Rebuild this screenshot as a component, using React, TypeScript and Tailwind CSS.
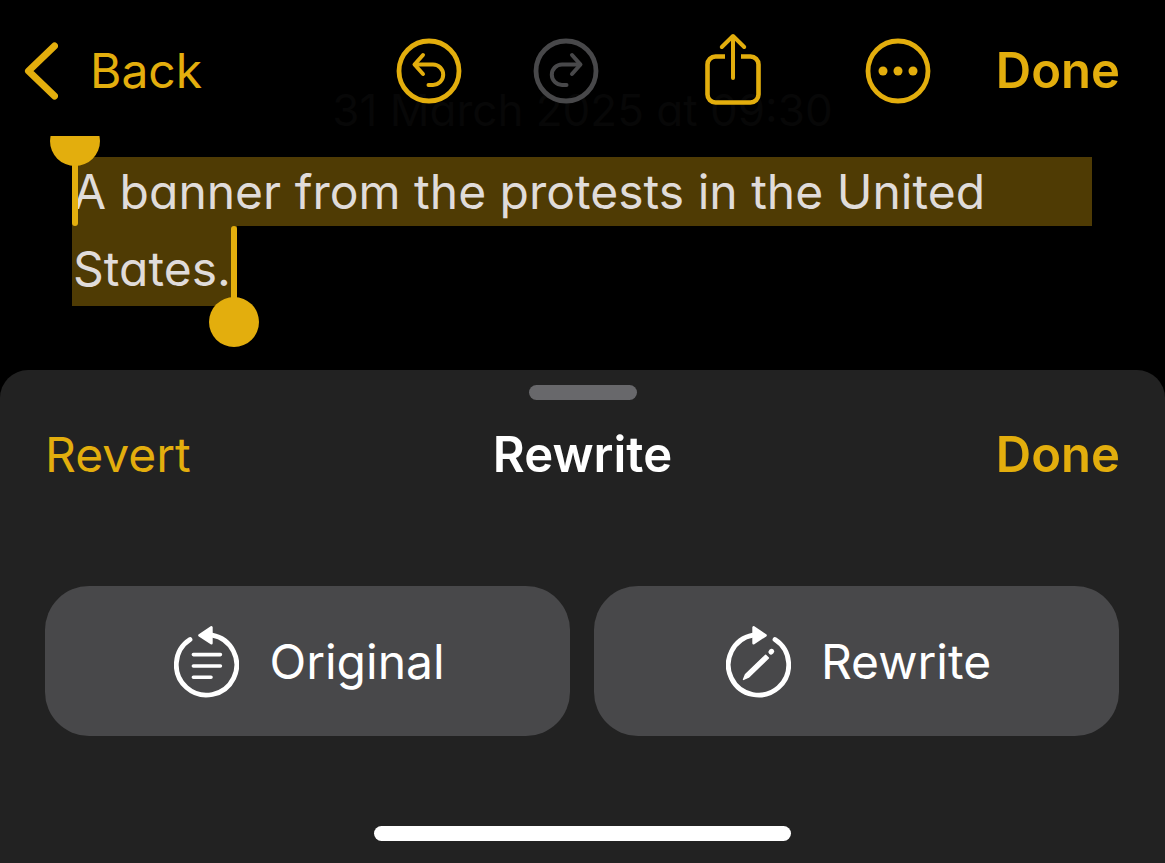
import type { ReactNode } from "react";

function CircleIcon({ children }: { children: ReactNode }) {
  return (
    <svg width="66" height="66" viewBox="0 0 66 66" fill="none" stroke="currentColor" aria-hidden="true">
      <circle cx="33" cy="33" r="30" strokeWidth="4.800" />
      {children}
    </svg>
  );
}

function Toolbar() {
  return (
    <header className="relative z-10 h-[136px] bg-black text-[#e3ae0d]">
      {/* note date, dimmed behind the bar */}
      <p className="absolute inset-x-0 top-20 text-center text-[44px] leading-[60px] text-[#070707] [font-feature-settings:'cv11']">
        31 March 2025 at 09:30
      </p>
      <div className="relative flex h-[141px] items-center pl-6 pr-[45px]">
        <button className="flex items-center gap-8">
          <svg width="34" height="58" viewBox="0 0 34 58" fill="none" stroke="currentColor" aria-hidden="true">
            <path d="M30.500 4 4.500 29 30.500 54" strokeWidth="7" strokeLinecap="round" strokeLinejoin="round" />
          </svg>
          Back
        </button>
        <div className="ml-auto mr-[65px] flex items-center">
          <button aria-label="Undo">
            <CircleIcon>
              <g strokeWidth="4" strokeLinecap="round" strokeLinejoin="round">
                <path d="M27 17 18.500 26.500 27 36" />
                <path d="M19 26.500H37a10.200 10.200 0 0 1 0 20.400H32.500" />
              </g>
            </CircleIcon>
          </button>
          <button aria-label="Redo" disabled className="ml-[71px] text-[#48484a]">
            <CircleIcon>
              <g strokeWidth="4" strokeLinecap="round" strokeLinejoin="round">
                <path d="M39 17 47.500 26.500 39 36" />
                <path d="M47 26.500H29a10.200 10.200 0 0 0 0 20.400H33.500" />
              </g>
            </CircleIcon>
          </button>
          <button aria-label="Share" className="ml-[106px]">
            <svg width="56" height="76" viewBox="0 0 56 76" fill="none" stroke="currentColor" aria-hidden="true">
              <path d="M20 23.500H10.500a8 8 0 0 0-8 8v30a8 8 0 0 0 8 8H45.500a8 8 0 0 0 8-8V31.500a8 8 0 0 0-8-8H36" strokeWidth="4.600" />
              <path d="M28 4V45M16.800 14 28 3 39.200 14" strokeWidth="4" strokeLinecap="round" strokeLinejoin="round" />
            </svg>
          </button>
          <button aria-label="More" className="ml-[104px]">
            <CircleIcon>
              <g fill="currentColor" stroke="none">
                <circle cx="18" cy="33" r="4.500" />
                <circle cx="33" cy="33" r="4.500" />
                <circle cx="48" cy="33" r="4.500" />
              </g>
            </CircleIcon>
          </button>
        </div>
        <button className="text-[49px] font-semibold">Done</button>
      </div>
    </header>
  );
}

function Note() {
  return (
    <main className="pb-16 pl-[72px] pr-[73px] pt-[21px] text-[#e0dcda] [font-feature-settings:'cv11']">
      <p>
        <span className="relative block bg-[#4f3b04] pl-px leading-[69px]">
          A banner from the protests in the United
          <span className="absolute bottom-0 left-0 h-16 w-1.5 rounded-full bg-[#e3ae0d]" />
          <span className="absolute -left-[22px] -top-[41px] size-[50px] rounded-full bg-[#e3ae0d]" />
        </span>
        <span className="relative inline-block bg-[#4f3b04] pl-px pr-1.5 pt-1.5 align-top leading-[74px]">
          States.
          <span className="absolute right-0 top-0 h-20 w-1.5 rounded-full bg-[#e3ae0d]" />
          <span className="absolute -right-[22px] top-[71px] size-[50px] rounded-full bg-[#e3ae0d]" />
        </span>
      </p>
    </main>
  );
}

function OriginalIcon() {
  return (
    <svg width="65" height="72" viewBox="0 0 65 72" fill="none" stroke="currentColor" strokeLinecap="round" strokeLinejoin="round" aria-hidden="true">
      <path d="M16 13.600A30.200 30.200 0 1 0 38 9.200" strokeWidth="4.800" />
      <path d="M25.500 9.300 37.400 1.400V17.200Z" fill="currentColor" strokeWidth="2.600" />
      <path d="M19.400 28.600H46.400M19.400 40H46.400M19.400 51.300H37" strokeWidth="3.600" />
    </svg>
  );
}

function RewriteIcon() {
  return (
    <svg width="65" height="72" viewBox="0 0 65 72" fill="none" stroke="currentColor" strokeLinecap="round" strokeLinejoin="round" aria-hidden="true">
      <path d="M49 13.600A30.200 30.200 0 1 1 27 9.200" strokeWidth="4.800" />
      <path d="M39.500 9.300 27.600 1.400V17.200Z" fill="currentColor" strokeWidth="2.600" />
      <path d="M39.600 29.200 42.400 32 22.500 51.200 17.500 53.400 19.500 48.400Z" fill="currentColor" strokeWidth="1.400" />
      <path d="M45 26 45.600 25.400" strokeWidth="5.200" />
    </svg>
  );
}

function RewriteSheet() {
  return (
    <section className="flex flex-1 flex-col items-center rounded-t-[28px] bg-[#222222] pt-[15px]">
      <div className="h-[15px] w-[108px] rounded-full bg-[#68686b]" />
      <div className="mt-[25px] grid w-full grid-cols-3 items-center px-[45px] leading-[60px] text-[#e3ae0d]">
        <button className="justify-self-start">Revert</button>
        <h2 className="text-center text-[49px] font-semibold text-white">Rewrite</h2>
        <button className="justify-self-end text-[49px] font-semibold">Done</button>
      </div>
      <div className="mt-[101px] grid w-full grid-cols-2 gap-6 pl-[45px] pr-[46px] text-white">
        <button className="flex h-[150px] items-center justify-center gap-[30px] rounded-[44px] bg-[#48484a] pl-1 pt-0.5">
          <OriginalIcon />
          Original
        </button>
        <button className="flex h-[150px] items-center justify-center gap-[30px] rounded-[44px] bg-[#48484a] pl-1 pt-0.5">
          <RewriteIcon />
          Rewrite
        </button>
      </div>
      <div className="mb-[22px] mt-auto h-[15px] w-[417px] rounded-full bg-white" />
    </section>
  );
}

export default function App() {
  return (
    <div className="flex min-h-screen flex-col bg-black font-[Inter,sans-serif] text-[48px] leading-[60px]">
      <Toolbar />
      <Note />
      <RewriteSheet />
    </div>
  );
}
